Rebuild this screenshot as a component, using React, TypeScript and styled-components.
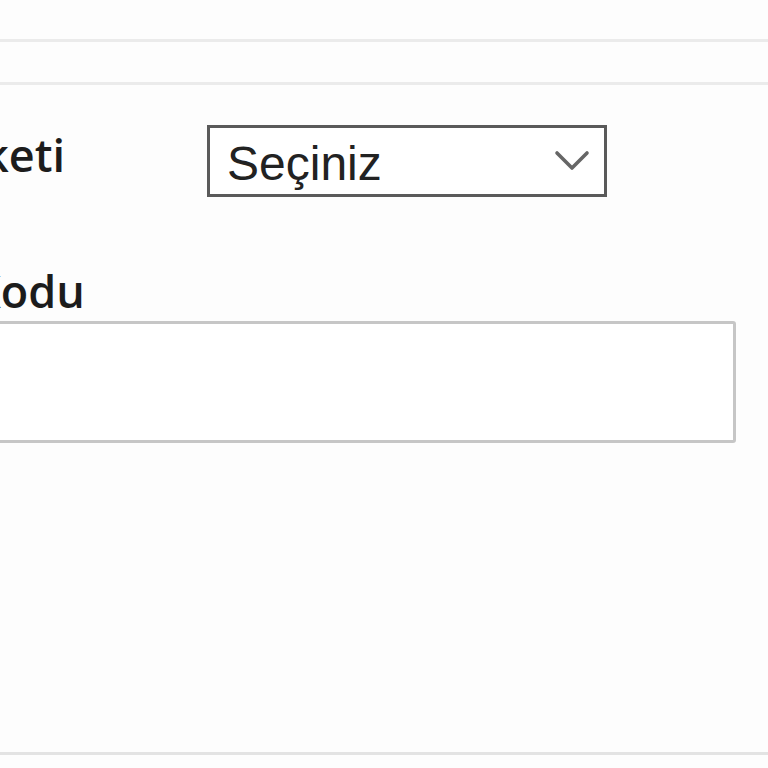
import React from 'react';
import styled, { createGlobalStyle } from 'styled-components';

const GlobalStyle = createGlobalStyle`
  html, body {
    margin: 0;
    padding: 0;
    background: #fdfdfd;
  }
  body {
    font-family: "Open Sans", "Liberation Sans", Arial, sans-serif;
    color: #1f1f1f;
    overflow: hidden;
  }
  * {
    box-sizing: border-box;
  }
`;

const Page = styled.div`
  width: 768px;
  height: 768px;
  overflow: hidden;
  display: flex;
  flex-direction: column;
`;

const Bar = styled.div<{ $height: number }>`
  height: ${p => p.$height}px;
  flex: none;
  border-bottom: 3px solid #ebebeb;
`;

const Form = styled.div`
  height: 670px;
  flex: none;
  margin-left: -28px;
  padding-top: 40px;
  border-bottom: 3px solid #e3e3e3;
  display: flex;
  flex-direction: column;
`;

const InlineRow = styled.div`
  display: flex;
  align-items: flex-start;
  height: 72px;
`;

const StackRow = styled.div`
  display: flex;
  flex-direction: column;
  margin-top: 71px;
`;

const LabelCol = styled.div`
  width: 93px;
  flex: none;
  display: flex;
  justify-content: flex-end;
  padding-top: 7px;
`;

const Label = styled.label`
  font-family: "Open Sans", "Liberation Sans", Arial, sans-serif;
  font-weight: 600;
  font-size: 45px;
  line-height: 1;
  white-space: nowrap;
  color: #1c1c1c;
`;

const SelectBox = styled.div`
  margin-left: 142px;
  width: 400px;
  height: 72px;
  flex: none;
  border: 3px solid #5a5a5a;
  background: #fff;
  display: flex;
  align-items: center;
  padding: 5px 14px 0 17px;
`;

const SelectText = styled.span`
  font-family: "Liberation Sans", Arial, sans-serif;
  font-size: 48px;
  line-height: 1;
  color: #222;
`;

const Chevron = styled.svg`
  margin-left: auto;
  margin-top: -5px;
  flex: none;
`;

const TextInput = styled.div`
  margin-top: 8px;
  width: 764px;
  height: 122px;
  border: 3px solid #c6c6c6;
  border-radius: 3px;
  background: #fff;
`;

export default function App() {
  return (
    <>
      <GlobalStyle />
      <Page>
        <Bar $height={42} />
        <Bar $height={43} />
        <Form>
          <InlineRow>
            <LabelCol>
              <Label>Paketi</Label>
            </LabelCol>
            <SelectBox>
              <SelectText>Seçiniz</SelectText>
              <Chevron width="36" height="22" viewBox="0 0 36 22">
                <path
                  d="M3 3 L18 18 L33 3"
                  fill="none"
                  stroke="#666"
                  strokeWidth="3.6"
                  strokeLinecap="round"
                  strokeLinejoin="round"
                />
              </Chevron>
            </SelectBox>
          </InlineRow>
          <StackRow>
            <Label>Kodu</Label>
            <TextInput />
          </StackRow>
        </Form>
      </Page>
    </>
  );
}
